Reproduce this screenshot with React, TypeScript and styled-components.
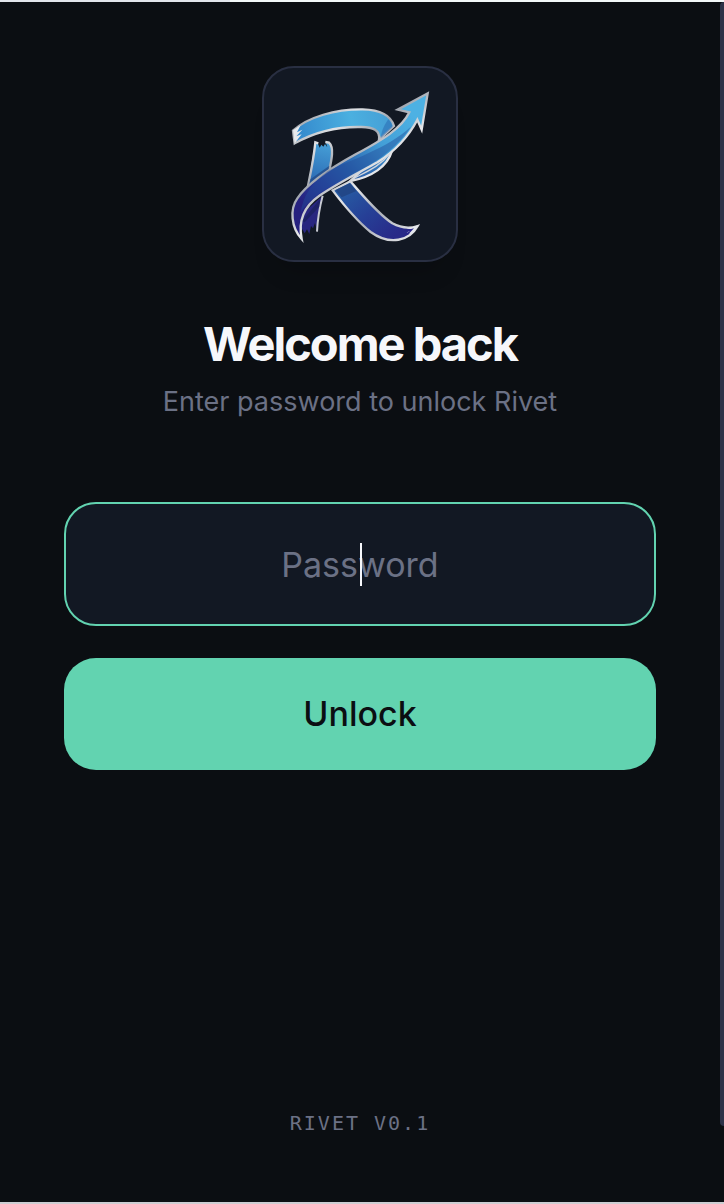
import React from "react";
import styled, { createGlobalStyle } from "styled-components";

const GlobalStyle = createGlobalStyle`
  *, *::before, *::after { box-sizing: border-box; }
  body {
    margin: 0;
    background: #0b0e12;
    color: #f6f7fb;
    font-family: Inter, "Liberation Sans", sans-serif;
    -webkit-font-smoothing: antialiased;
  }
`;

const Window = styled.div`
  display: flex;
  flex-direction: column;
  min-height: 100vh;
`;

const TopEdge = styled.div`
  display: flex;
  flex-shrink: 0;
  height: 2px;
  background: #e2e5eb;

  &::after {
    content: "";
    flex: 1;
    margin-left: 230px;
    background: #f3f8f8;
  }
`;

const BottomEdge = styled.div`
  flex-shrink: 0;
  height: 2px;
  background: #cdced2;
`;

const Body = styled.div`
  display: flex;
  flex: 1;
`;

const Rail = styled.div`
  display: flex;
  width: 4px;
  padding-bottom: 76px;
`;

const Thumb = styled.div`
  flex: 1;
  border-radius: 4px 0 0 4px;
  background: #2d3248;
`;

const Screen = styled.main`
  display: flex;
  flex: 1;
  flex-direction: column;
  align-items: center;
  padding: 64px;
`;

const LogoTile = styled.div`
  width: 196px;
  height: 196px;
  border: 2px solid #292f42;
  border-radius: 32px;
  background: #121823;
  box-shadow: 0 24px 24px -16px rgba(0, 0, 0, 0.2);

  svg {
    display: block;
    width: 100%;
    height: 100%;
  }
`;

const Title = styled.h1`
  margin: 52px 0 8px;
  font-size: 47px;
  line-height: 60px;
  font-weight: 700;
  letter-spacing: -2px;
`;

const Subtitle = styled.p`
  margin: 0 0 80px;
  color: #6b7185;
  font-size: 27px;
  line-height: 40px;
`;

const Form = styled.form`
  display: flex;
  flex-direction: column;
  gap: 32px;
  width: 100%;
`;

const Field = styled.div`
  position: relative;
  display: flex;
`;

const PasswordInput = styled.input`
  width: 100%;
  height: 124px;
  padding: 0 32px;
  border: 2px solid #62d3b0;
  border-radius: 32px;
  outline: none;
  background: #121823;
  color: #f6f7fb;
  caret-color: transparent;
  font: 400 34px/44px Inter, "Liberation Sans", sans-serif;
  text-align: center;

  &::placeholder {
    color: #6b7185;
    opacity: 1;
  }
`;

const Caret = styled.span`
  position: absolute;
  top: 41px;
  left: 50%;
  width: 2px;
  height: 43px;
  background: #f6f7fb;
  pointer-events: none;
`;

const UnlockButton = styled.button`
  height: 112px;
  padding: 0 32px;
  border: 0;
  border-radius: 32px;
  background: #62d3b0;
  color: #0b0e12;
  font: 500 34px/44px Inter, "Liberation Sans", sans-serif;
  cursor: pointer;
`;

const Version = styled.footer`
  margin-top: auto;
  color: #6b7185;
  font-family: "DejaVu Sans Mono", "Liberation Mono", monospace;
  font-size: 20px;
  line-height: 30px;
  letter-spacing: 2px;
`;

function RivetLogo() {
  return (
    <svg viewBox="27 24 576 576" role="img" aria-label="Rivet">
      <defs>
        <linearGradient id="blue" gradientUnits="userSpaceOnUse" x1="390" y1="150" x2="270" y2="540">
          <stop offset="0" stopColor="#4fb0e2" />
          <stop offset="0.3" stopColor="#3a8dcb" />
          <stop offset="0.62" stopColor="#27509f" />
          <stop offset="1" stopColor="#28258a" />
        </linearGradient>
        <linearGradient id="leg" gradientUnits="userSpaceOnUse" x1="280" y1="380" x2="410" y2="535">
          <stop offset="0" stopColor="#275ba3" />
          <stop offset="0.5" stopColor="#263f96" />
          <stop offset="1" stopColor="#282988" />
        </linearGradient>
        <linearGradient id="stem" gradientUnits="userSpaceOnUse" x1="205" y1="250" x2="175" y2="370">
          <stop offset="0" stopColor="#459ed6" />
          <stop offset="1" stopColor="#2b69b3" />
        </linearGradient>
        <linearGradient id="swoosh" gradientUnits="userSpaceOnUse" x1="460" y1="150" x2="150" y2="440">
          <stop offset="0" stopColor="#4db1e3" />
          <stop offset="0.3" stopColor="#439fd7" />
          <stop offset="0.6" stopColor="#2961ad" />
          <stop offset="0.82" stopColor="#273b98" />
          <stop offset="1" stopColor="#26217f" />
        </linearGradient>
        <linearGradient id="bowl" gradientUnits="userSpaceOnUse" x1="115" y1="230" x2="410" y2="170">
          <stop offset="0" stopColor="#3286cb" />
          <stop offset="0.6" stopColor="#4bb0e0" />
          <stop offset="1" stopColor="#459ed5" />
        </linearGradient>
        <linearGradient id="silver" gradientUnits="userSpaceOnUse" x1="110" y1="120" x2="470" y2="540" spreadMethod="reflect">
          <stop offset="0" stopColor="#e8e8ea" />
          <stop offset="0.13" stopColor="#a9aeb5" />
          <stop offset="0.27" stopColor="#e0e2e5" />
          <stop offset="0.42" stopColor="#a2a7b0" />
          <stop offset="0.58" stopColor="#e8e9ec" />
          <stop offset="0.76" stopColor="#acb0b9" />
          <stop offset="1" stopColor="#e4e5e9" />
        </linearGradient>
      </defs>

      <g stroke="url(#silver)" strokeWidth="7" strokeLinejoin="miter">
        <path fill="url(#blue)" d="M410 275C397 319 351 351 286 363L330 322Z" />
        <path
          fill="url(#bowl)"
          d="M114 212C158 171 242 147 323 148C376 149 407 165 417 198L372 239C376 211 355 200 315 201C243 200 174 219 119 250Z"
        />
        <path
          fill="url(#leg)"
          d="M233 391C267 436 309 485 347 516C405 558 464 542 488 498C461 507 436 503 412 490C367 460 326 409 286 364Z"
        />
      </g>

      <path
        fill="url(#stem)"
        d="M180 246L189 251L194 263L199 254L205 260L210 252L217 262L212 245L224 249C237 258 230 299 222 335L158 382Z"
      />
      <path
        fill="none"
        stroke="url(#silver)"
        strokeWidth="7"
        d="M158 382C166 343 176 299 181 247L190 250M211 246L222 248C238 262 230 299 222 335"
      />
      <path
        fill="#28257f"
        d="M132 470L203 407C194 441 188 475 186 512L180 489L174 505L168 498L163 522L156 508L149 520L142 508L136 514Z"
      />
      <path fill="none" stroke="#c7cad2" strokeWidth="6" d="M203 407C194 441 188 475 186 515" />

      <path fill="#21417f" opacity="0.75" d="M241 390L284 370L304 393L260 412Z" />
      <path fill="#2c70b5" opacity="0.6" d="M377 235C380 208 390 192 400 178Q410 188 413 201Z" />
      <path fill="#214681" opacity="0.7" d="M166 358L223 317L220 333L162 376Z" />
      <path fill="#171f55" opacity="0.6" d="M141 483L196 416L193 440L149 487Z" />

      <path
        fill="url(#swoosh)"
        stroke="url(#silver)"
        strokeWidth="7"
        d="M140 537C108 502 104 447 127 415C160 367 229 323 302 283C383 239 440 205 463 157L428 149L518 100L500 209L487 179C462 227 420 273 367 307C306 341 243 373 192 408C149 438 128 477 140 537Z"
      />
      <path
        fill="#214c98"
        opacity="0.45"
        d="M219 333C284 302 401 264 469 199C432 256 376 300 315 330C241 367 171 404 137 458C143 407 174 365 219 333Z"
      />
      <path
        fill="none"
        stroke="#d2d7de"
        strokeWidth="4"
        d="M405 280C374 320 337 334 293 357"
      />
      <path fill="#e8eaed" d="M114 211L137 195L126 217L142 209L124 229L140 223L119 250Z" />
      <path fill="#e4e6eb" d="M490 496L454 506L470 508L455 519L466 521L455 531Q477 521 490 496Z" />
      <path fill="#28258a" d="M477 505L448 512L464 513L447 525L461 522Z" />
    </svg>
  );
}

export default function App() {
  return (
    <>
      <GlobalStyle />
      <Window>
        <TopEdge />
        <Body>
          <Screen>
            <LogoTile>
              <RivetLogo />
            </LogoTile>
            <Title>Welcome back</Title>
            <Subtitle>Enter password to unlock Rivet</Subtitle>
            <Form onSubmit={(event) => event.preventDefault()}>
              <Field>
                <PasswordInput type="password" placeholder="Password" aria-label="Password" />
                <Caret aria-hidden="true" />
              </Field>
              <UnlockButton type="submit">Unlock</UnlockButton>
            </Form>
            <Version>RIVET V0.1</Version>
          </Screen>
          <Rail aria-hidden="true">
            <Thumb />
          </Rail>
        </Body>
        <BottomEdge />
      </Window>
    </>
  );
}
